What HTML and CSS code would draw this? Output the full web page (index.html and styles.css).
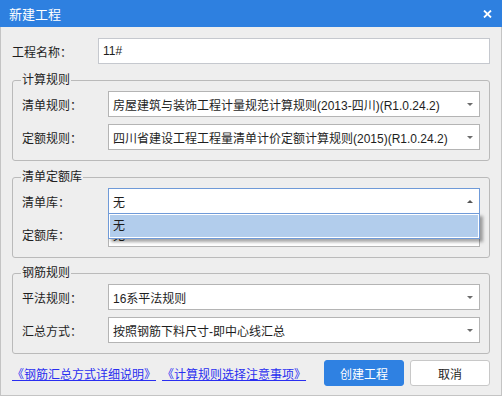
FILE: index.html
```html
<html>
<head>
  <meta charset="utf-8">
  <title>新建工程</title>
  <link rel="stylesheet" href="styles.css">
</head>
<body>
  <div class="window">
    <div class="titlebar">
      <span class="title">新建工程</span>
      <svg class="close" width="9" height="8" viewBox="0 0 9 8">
        <path d="M1 0.5 L8 7.5 M8 0.5 L1 7.5" stroke="#fff" stroke-width="1.8" fill="none"/>
      </svg>
    </div>

    <div class="body">
      <div class="row">
        <span class="label">工程名称：</span>
        <div class="textbox">11#</div>
      </div>

      <fieldset class="group">
        <legend>计算规则</legend>
        <div class="row">
          <span class="label">清单规则：</span>
          <div class="select"><span class="value">房屋建筑与装饰工程计量规范计算规则(2013-四川)(R1.0.24.2)</span><span class="arrow"></span></div>
        </div>
        <div class="row">
          <span class="label">定额规则：</span>
          <div class="select"><span class="value">四川省建设工程工程量清单计价定额计算规则(2015)(R1.0.24.2)</span><span class="arrow"></span></div>
        </div>
      </fieldset>

      <fieldset class="group">
        <legend>清单定额库</legend>
        <div class="row">
          <span class="label">清单库：</span>
          <div class="select open">
            <span class="value">无</span><span class="arrow up"></span>
            <div class="dropdown">
              <div class="option selected">无</div>
            </div>
          </div>
        </div>
        <div class="row">
          <span class="label">定额库：</span>
          <div class="select"><span class="value">无</span><span class="arrow"></span></div>
        </div>
      </fieldset>

      <fieldset class="group group-last">
        <legend>钢筋规则</legend>
        <div class="row">
          <span class="label">平法规则：</span>
          <div class="select"><span class="value">16系平法规则</span><span class="arrow"></span></div>
        </div>
        <div class="row">
          <span class="label">汇总方式：</span>
          <div class="select"><span class="value">按照钢筋下料尺寸-即中心线汇总</span><span class="arrow"></span></div>
        </div>
      </fieldset>

      <div class="footer">
        <a class="link" href="#">《钢筋汇总方式详细说明》</a>
        <a class="link" href="#">《计算规则选择注意事项》</a>
        <span class="spacer"></span>
        <button class="btn btn-primary">创建工程</button>
        <button class="btn">取消</button>
      </div>
    </div>
  </div>
</body>
</html>
```

FILE: styles.css
```css
body {
  margin: 0;
  font-family: "Liberation Sans", "Noto Sans CJK SC", sans-serif;
  font-size: 12px;
  color: #1e1e1e;
}

.window {
  width: 502px;
  height: 396px;
  background-color: #eeeeee;
}

/* barra de titulo */
.titlebar {
  height: 27px;
  background-color: #2e80e0;
  display: flex;
  align-items: center;
  justify-content: space-between;
  padding: 0 10px 0 9px;
  box-sizing: border-box;
}

.title {
  color: #fff;
  font-size: 13px;
}

.close {
  display: block;
}

.body {
  height: 369px;
  box-sizing: border-box;
  border: 1px solid #c4c4c4;
  border-top: none;
  padding: 11px 11px 0;
}

.row {
  display: flex;
  align-items: center;
}

.label {
  width: 86px;
  flex: none;
}

.textbox {
  flex: 1;
  height: 26px;
  box-sizing: border-box;
  border: 1px solid #c5c8ce;
  background-color: #fff;
  line-height: 24px;
  padding-left: 4px;
}

/* grupos */
.group {
  margin: 9px 0 0;
  padding: 4px 9px 10px;
  border: 1px solid #bababa;
  border-radius: 3px;
}

.group-last {
  margin-top: 8px;
}

.group legend {
  padding: 0 1px;
  margin-left: -1px;
  line-height: 14px;
  color: #222;
}

.group .row + .row {
  margin-top: 7px;
}

.select {
  flex: 1;
  height: 26px;
  box-sizing: border-box;
  border: 1px solid #b4b4b4;
  background-color: #fff;
  display: flex;
  align-items: center;
  padding: 0 6px 0 4px;
}

.select .value {
  flex: 1;
  white-space: nowrap;
  overflow: hidden;
}

.arrow {
  width: 0;
  height: 0;
  border-left: 3px solid transparent;
  border-right: 3px solid transparent;
  border-top: 3px solid #6c6c6c;
}

.arrow.up {
  border-top: none;
  border-bottom: 3px solid #555;
}

/* lista desplegada */
.select.open {
  position: relative;
  border-color: #6f9ad8;
  z-index: 2;
}

.dropdown {
  position: absolute;
  left: -1px;
  right: -1px;
  top: 24px;
  border: 1px solid #6f9ad8;
  background-color: #fff;
  padding: 1px;
  box-shadow: 3px 3px 3px rgba(0, 0, 0, 0.35);
}

.option {
  height: 22px;
  line-height: 22px;
  padding-left: 3px;
}

.option.selected {
  background-color: #b2cdec;
}

/* pie */
.footer {
  display: flex;
  align-items: center;
  margin-top: 6px;
  gap: 6px;
}

.link {
  color: #2a2ef0;
  text-decoration: underline;
}

.spacer {
  flex: 1;
}

.btn {
  width: 80px;
  height: 26px;
  border: 1px solid #c8c8c8;
  border-radius: 3px;
  background-color: #fff;
  font-family: inherit;
  font-size: 12px;
  color: #1e1e1e;
  padding: 0;
  cursor: pointer;
}

.btn-primary {
  background-color: #2f81e2;
  border-color: #2f81e2;
  color: #fff;
}
```
